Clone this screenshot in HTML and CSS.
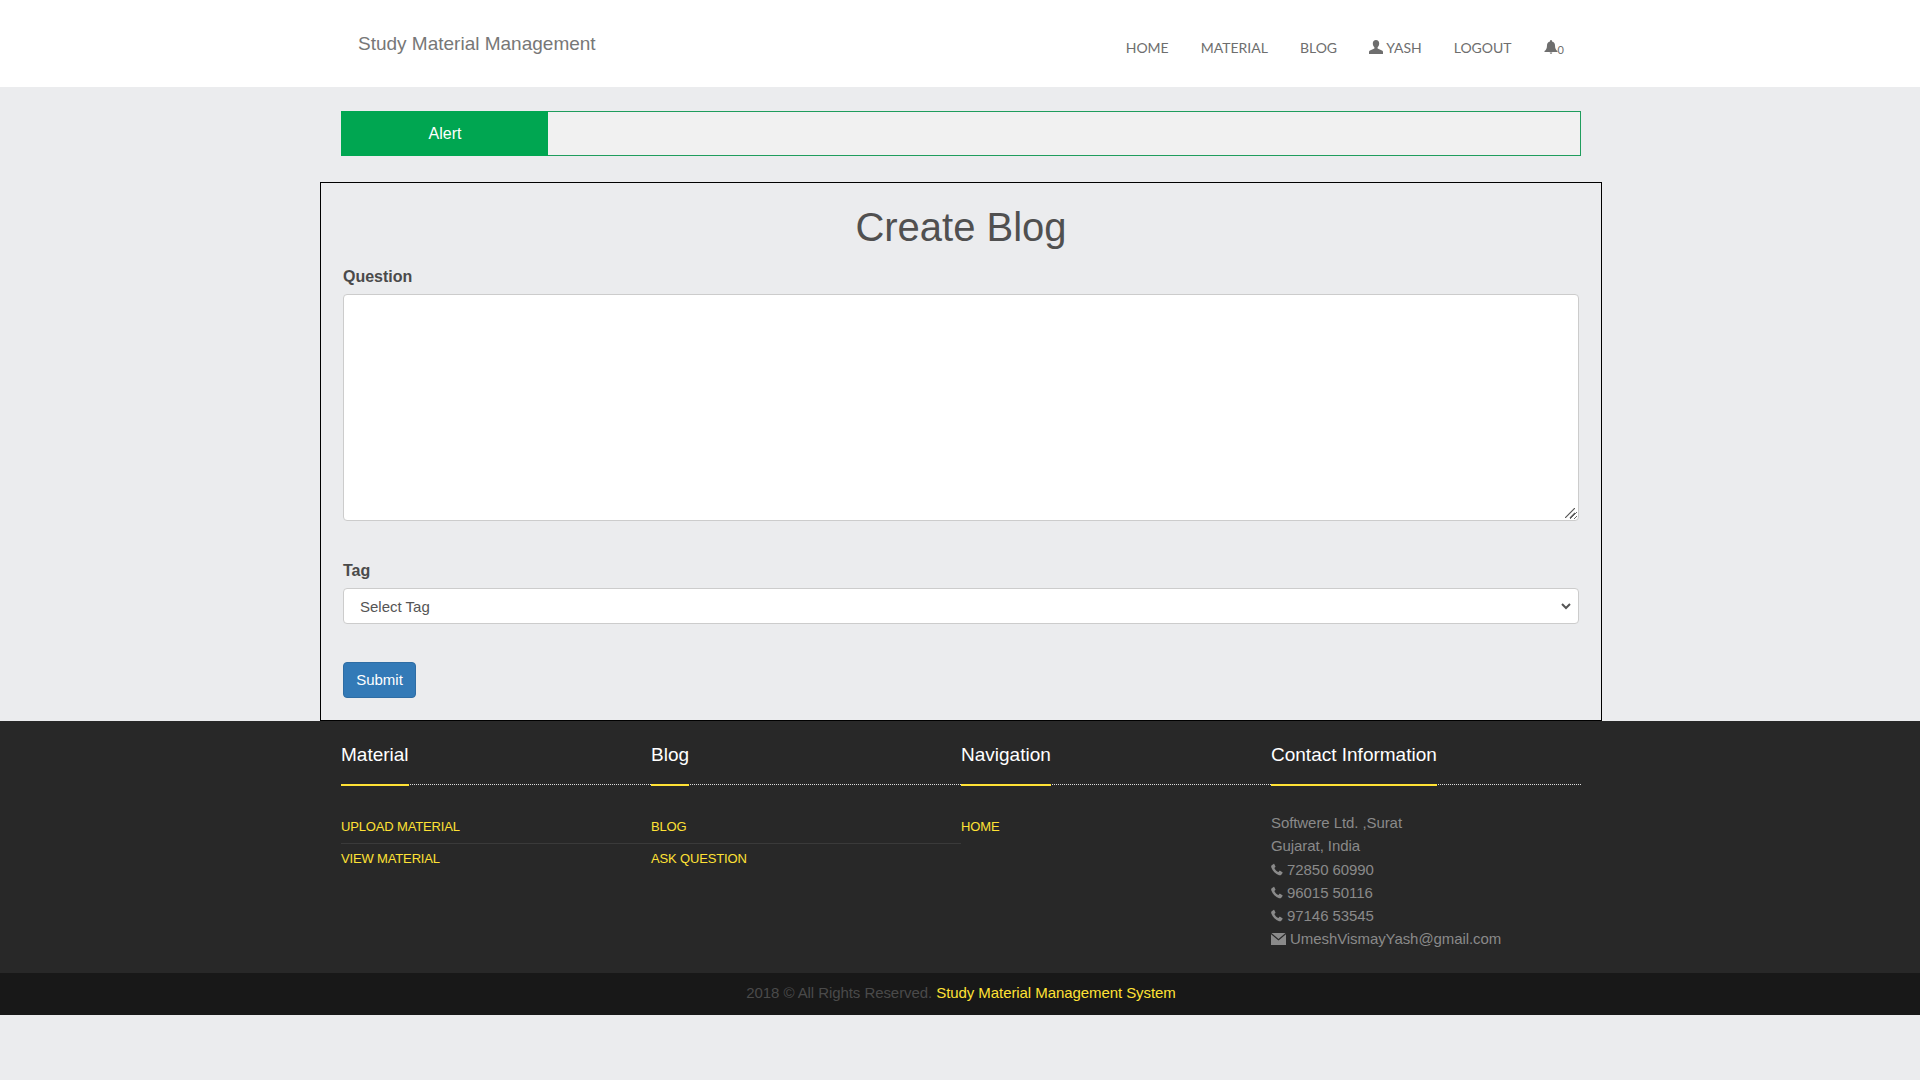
FILE: index.html
```html
<!DOCTYPE html>
<html>
<head>
    <title>Create Blog</title>
    <link rel="stylesheet" href="styles.css">
</head>
<body>
    <nav class="navbar">
        <a class="brand" href="#">Study Material Management</a>
        <ul class="nav-links">
            <li><a href="#">HOME</a></li>
            <li><a href="#">MATERIAL</a></li>
            <li><a href="#">BLOG</a></li>
            <li><a href="#"><svg class="icon-user" viewBox="0 0 14 14"><path d="M7 0C5 0 3.8 1.500 3.800 3.500c0 1.500.7 3 1.600 3.800v1.200L1 10.500c-.6.3-1 .8-1 1.500V14h14v-2c0-.7-.4-1.200-1-1.500L8.600 8.500V7.300c.9-.8 1.600-2.300 1.600-3.800C10.200 1.500 9 0 7 0z"/></svg> YASH</a></li>
            <li><a href="#">LOGOUT</a></li>
            <li><a href="#" class="bell"><svg class="icon-bell" viewBox="0 0 14 14"><path d="M7 0a1 1 0 0 0-1 1v.6C3.900 2 3 3.600 3 5.500c0 3-1 4.500-2.500 5.500v1h13v-1C12 10 11 8.500 11 5.500c0-1.900-.9-3.500-3-3.900V1a1 1 0 0 0-1-1zM5.700 12.500a1.300 1.300 0 0 0 2.600 0z"/></svg><span class="count">0</span></a></li>
        </ul>
    </nav>

    <div class="alert-bar">
        <div class="alert-label">Alert</div>
    </div>

    <div class="blog-box">
        <h1>Create Blog</h1>
        <form>
            <label class="first-label" for="question">Question</label>
            <div class="field">
                <textarea id="question" class="question"></textarea>
                <svg class="grip" viewBox="0 0 10 10"><path d="M0 10L10 0M5 10L10 5"/></svg>
            </div>
            <label class="tag-label" for="tag">Tag</label>
            <div class="field">
                <select id="tag" class="tag-select">
                    <option>Select Tag</option>
                </select>
                <svg class="chevron" viewBox="0 0 10 7"><path d="M1 1l4 4 4-4"/></svg>
            </div>
            <button class="btn-submit" type="button">Submit</button>
        </form>
    </div>

    <footer class="footer">
        <div class="footer-grid">
            <div>
                <h3 class="foot-head"><span>Material</span></h3>
                <ul class="foot-links">
                    <li><a href="#">UPLOAD MATERIAL</a></li>
                    <li><a href="#">VIEW MATERIAL</a></li>
                </ul>
            </div>
            <div>
                <h3 class="foot-head"><span>Blog</span></h3>
                <ul class="foot-links">
                    <li><a href="#">BLOG</a></li>
                    <li><a href="#">ASK QUESTION</a></li>
                </ul>
            </div>
            <div>
                <h3 class="foot-head"><span>Navigation</span></h3>
                <ul class="foot-links">
                    <li><a href="#">HOME</a></li>
                </ul>
            </div>
            <div>
                <h3 class="foot-head"><span>Contact Information</span></h3>
                <div class="contact">
                    <div>Softwere Ltd. ,Surat</div>
                    <div>Gujarat, India</div>
                    <div><svg class="icon-phone" viewBox="0 0 14 14"><path d="M3 .5L.8 2C.2 2.600 0 3.500.4 4.600c1.400 4 5 7.600 9 9 1.100.4 2 .2 2.600-.4l1.500-2.200c.2-.3.1-.6-.2-.8l-2.700-1.700c-.3-.2-.6-.1-.8.1l-1 1.200C6.600 9.300 4.700 7.400 3.900 5.200l1.200-1c.2-.2.3-.5.1-.8L3.800.7C3.600.4 3.300.3 3 .5z"/></svg> 72850 60990</div>
                    <div><svg class="icon-phone" viewBox="0 0 14 14"><path d="M3 .5L.8 2C.2 2.600 0 3.500.4 4.600c1.400 4 5 7.600 9 9 1.100.4 2 .2 2.600-.4l1.500-2.200c.2-.3.1-.6-.2-.8l-2.700-1.700c-.3-.2-.6-.1-.8.1l-1 1.200C6.600 9.300 4.700 7.400 3.900 5.200l1.200-1c.2-.2.3-.5.1-.8L3.800.7C3.600.4 3.300.3 3 .5z"/></svg> 96015 50116</div>
                    <div><svg class="icon-phone" viewBox="0 0 14 14"><path d="M3 .5L.8 2C.2 2.600 0 3.500.4 4.600c1.400 4 5 7.600 9 9 1.100.4 2 .2 2.600-.4l1.500-2.200c.2-.3.1-.6-.2-.8l-2.700-1.700c-.3-.2-.6-.1-.8.1l-1 1.200C6.600 9.300 4.700 7.400 3.900 5.200l1.200-1c.2-.2.3-.5.1-.8L3.800.7C3.600.4 3.300.3 3 .5z"/></svg> 97146 53545</div>
                    <div><svg class="icon-mail" viewBox="0 0 15 12"><path d="M.5 0h14L7.500 6zM0 1.200V12h15V1.200L7.500 7.600z"/></svg> UmeshVismayYash@gmail.com</div>
                </div>
            </div>
        </div>
    </footer>
    <div class="copyright">2018 © All Rights Reserved. <a href="#">Study Material Management System</a></div>
</body>
</html>
```

FILE: styles.css
```css
body {
    margin: 0;
    font-family: "Liberation Sans", Arial, sans-serif;
    background-color: #ebecee;
    color: #4a4a4a;
}

a {
    text-decoration: none;
}

ul {
    list-style: none;
    margin: 0;
    padding: 0;
}

.navbar {
    height: 87px;
    background-color: #fff;
    display: flex;
    justify-content: space-between;
    padding-left: 358px;
    padding-right: 356px;
}

.brand {
    font-size: 19px;
    line-height: 87px;
    color: #777;
}

.nav-links {
    display: flex;
    gap: 32px;
    padding-top: 38px;
}

.nav-links a {
    font-family: Lato, sans-serif;
    font-size: 14px;
    line-height: 20px;
    color: #6e6e6e;
    display: block;
}

.icon-user {
    width: 14px;
    height: 14px;
    fill: #6e6e6e;
    vertical-align: -1px;
}

.bell {
    display: flex;
}

.icon-bell {
    width: 14px;
    height: 14px;
    fill: #6e6e6e;
    margin-top: 2px;
}

.count {
    font-size: 11px;
    margin-top: 1px;
}

.alert-bar {
    width: 1240px;
    height: 45px;
    box-sizing: border-box;
    margin: 24px 0 0 341px;
    background-color: #f1f1f1;
    border: 1px solid #1f9d5d;
    display: flex;
}

.alert-label {
    width: 207px;
    margin: -1px 0 -1px -1px;
    padding-left: 1px;
    box-sizing: border-box;
    background-color: #00a651;
    color: #fff;
    font-size: 16px;
    line-height: 45px;
    text-align: center;
}

.blog-box {
    width: 1282px;
    box-sizing: border-box;
    margin: 26px 0 0 320px;
    padding: 0 22px 22px;
    border: 1px solid #000;
}

h1 {
    font-size: 40px;
    font-weight: 400;
    line-height: 44px;
    text-align: center;
    margin: 22px 0 0;
    color: #505050;
}

label {
    display: block;
    font-size: 16px;
    font-weight: 700;
    line-height: 20px;
    margin-bottom: 7px;
}

.first-label {
    margin-top: 18px;
}

.tag-label {
    margin-top: 40px;
}

.field {
    position: relative;
}

.question {
    display: block;
    width: 100%;
    height: 227px;
    box-sizing: border-box;
    background-color: #fff;
    border: 1px solid #ccc;
    border-radius: 4px;
}

.grip {
    position: absolute;
    right: 4px;
    bottom: 3px;
    width: 10px;
    height: 10px;
    fill: none;
    stroke: #555;
    stroke-width: 1.2;
    pointer-events: none;
}

.tag-select {
    display: block;
    width: 100%;
    height: 36px;
    box-sizing: border-box;
    padding: 0 16px;
    appearance: none;
    font-family: "Liberation Sans", Arial, sans-serif;
    font-size: 15px;
    color: #555;
    background-color: #fff;
    border: 1px solid #ccc;
    border-radius: 4px;
}

.chevron {
    position: absolute;
    right: 8px;
    top: 15px;
    width: 10px;
    height: 7px;
    fill: none;
    stroke: #555;
    stroke-width: 2;
    pointer-events: none;
}

.btn-submit {
    display: block;
    width: 73px;
    height: 36px;
    margin-top: 38px;
    padding: 0 0 2px;
    font-family: "Liberation Sans", Arial, sans-serif;
    font-size: 15px;
    color: #fff;
    background-color: #337ab7;
    border: 1px solid #2e6da4;
    border-radius: 4px;
}

.footer {
    background-color: #282828;
    padding: 20px 0 22px 341px;
}

.footer-grid {
    width: 1240px;
    display: grid;
    grid-template-columns: repeat(4, 310px);
}

.foot-head {
    display: flex;
    margin: 0;
    font-size: 19px;
    font-weight: 400;
    color: #fff;
    border-bottom: 1px dotted #ddd;
}

.foot-head span {
    line-height: 28px;
    padding-bottom: 15px;
    border-bottom: 2px solid #ffe135;
    margin-bottom: -2px;
}

.foot-links {
    margin-top: 27px;
}

.foot-links li {
    padding: 5px 0 6px;
    border-bottom: 1px solid #3a3a3a;
}

.foot-links li:last-child {
    border-bottom: none;
}

.foot-links a {
    display: block;
    font-size: 13px;
    letter-spacing: -0.15px;
    line-height: 20px;
    color: #ffe135;
}

.contact {
    margin-top: 26px;
    font-size: 15px;
    letter-spacing: -0.08px;
    line-height: 23.25px;
    color: #8a8a8a;
}

.icon-phone {
    width: 12px;
    height: 13px;
    fill: #8a8a8a;
    vertical-align: -1px;
}

.icon-mail {
    width: 15px;
    height: 12px;
    fill: #8a8a8a;
    vertical-align: -1px;
}

.copyright {
    height: 42px;
    padding-left: 2px;
    background-color: #181818;
    font-size: 15px;
    letter-spacing: -0.07px;
    line-height: 40px;
    text-align: center;
    color: #4a4a4a;
}

.copyright a {
    color: #ffe135;
}
```
